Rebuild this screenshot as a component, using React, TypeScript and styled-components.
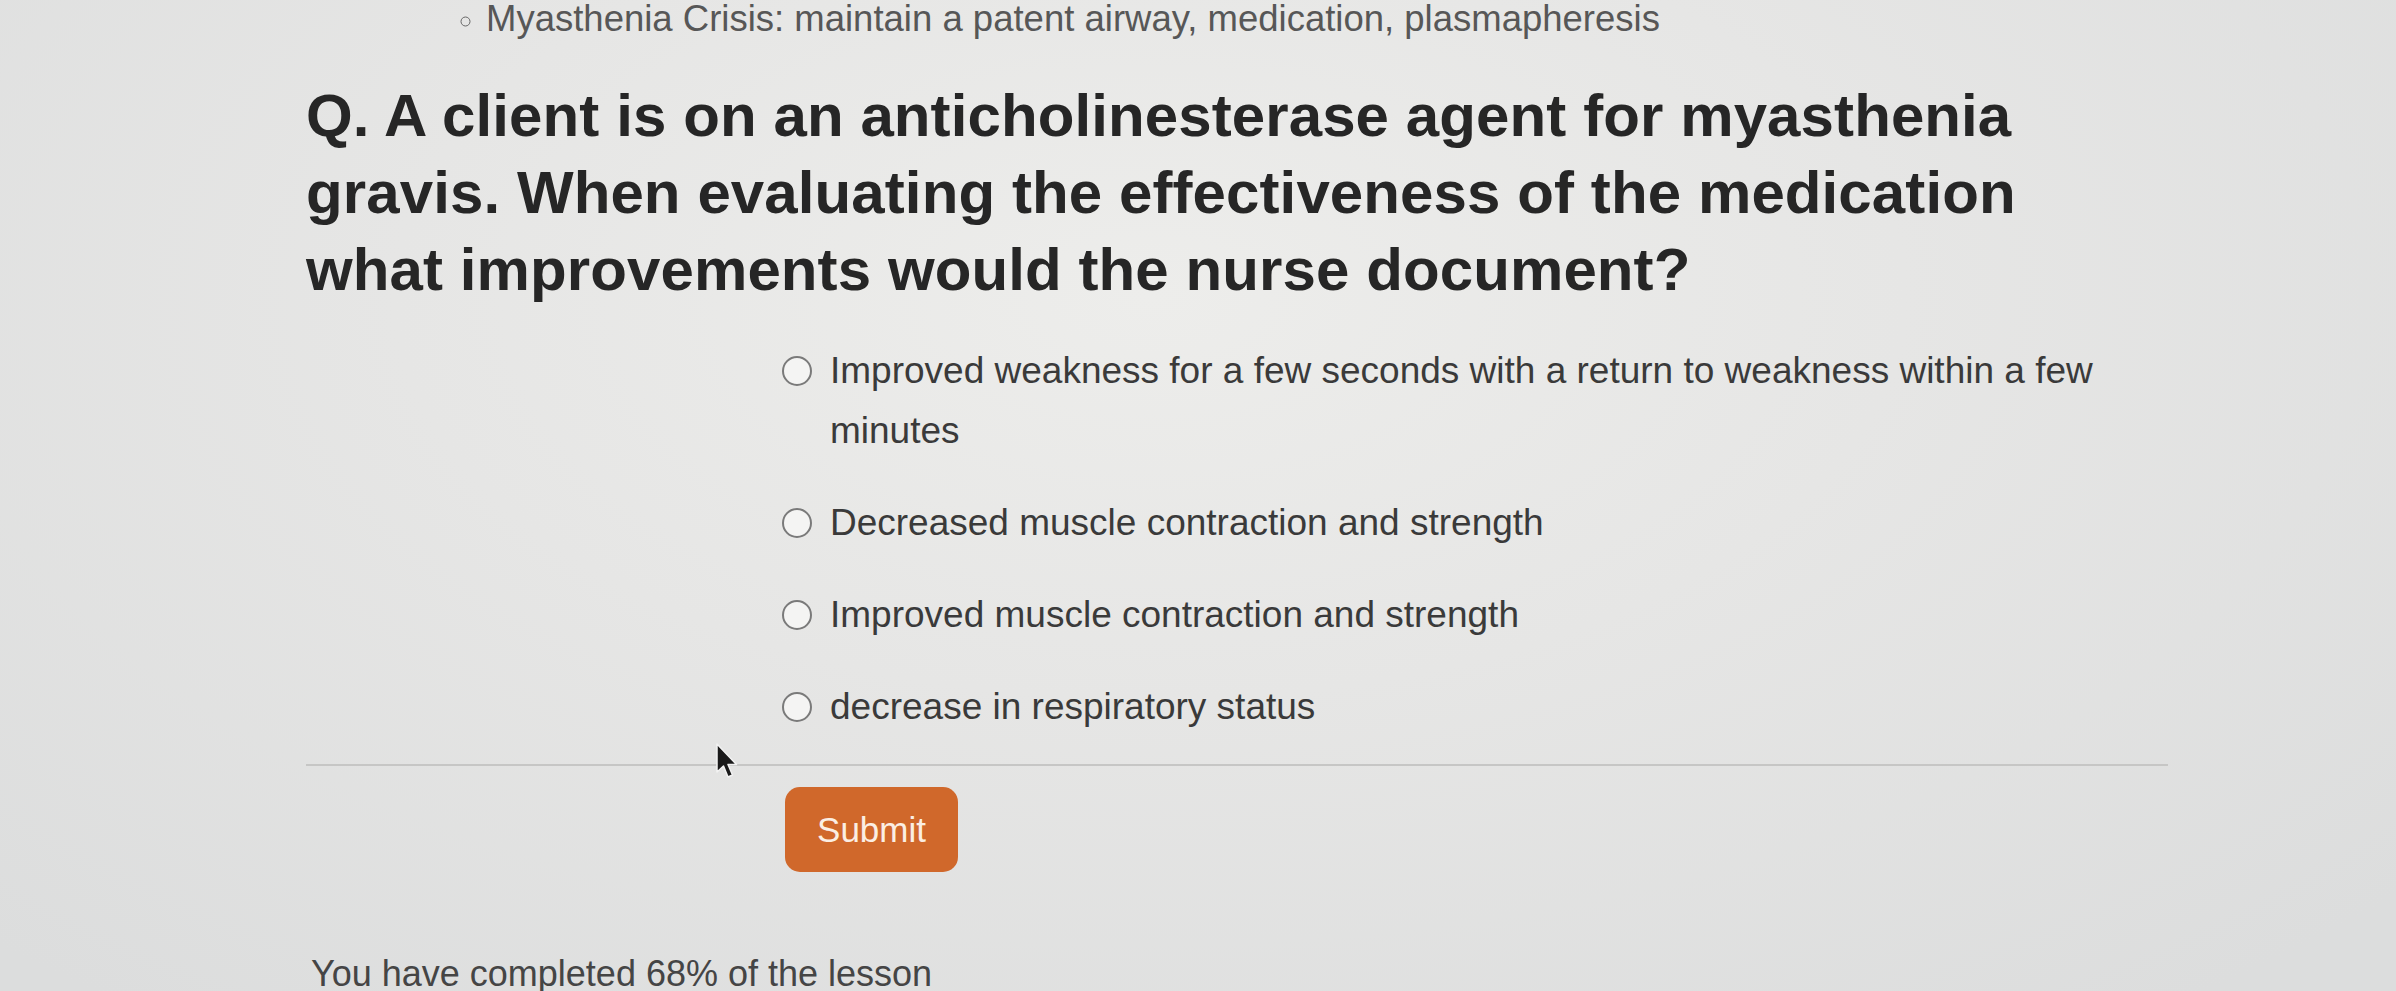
import React from "react";
import styled, { createGlobalStyle } from "styled-components";

const GlobalStyle = createGlobalStyle`
  html, body {
    margin: 0;
    padding: 0;
    height: 100%;
    overflow: hidden;
  }
  body {
    background: radial-gradient(ellipse 70% 90% at 48% 30%, #ededeb 0%, #e6e6e5 45%, #dcdddd 100%);
    font-family: "Liberation Sans", Arial, sans-serif;
  }
`;

const Page = styled.div`
  position: relative;
  width: 2396px;
  height: 991px;
  overflow: hidden;
  padding-left: 306px;
  box-sizing: border-box;
`;

const TopNote = styled.ul`
  margin: -1px 0 0 0;
  padding-left: 180px;
  list-style: circle;
  font-size: 36.5px;
  line-height: 40px;
  color: #575757;
  li::marker {
    font-size: 30px;
    color: #666;
  }
`;

const Heading = styled.h2`
  margin: 38px 0 0 0;
  font-size: 60px;
  line-height: 77px;
  font-weight: 700;
  color: #262626;
  white-space: nowrap;
  letter-spacing: 0.1px;
`;

const Options = styled.div`
  margin: 33px 0 0 476px;
  display: flex;
  flex-direction: column;
  gap: 32px;
`;

const Option = styled.label`
  display: flex;
  align-items: flex-start;
  gap: 18px;
  font-size: 37px;
  line-height: 60px;
  color: #3a3a3a;
  white-space: nowrap;
`;

const Radio = styled.span`
  flex: none;
  width: 26px;
  height: 26px;
  margin-top: 15px;
  border: 2.5px solid #7a7a7a;
  border-radius: 50%;
  background: #f4f4f3;
`;

const Divider = styled.hr`
  margin: 27px 0 0 0;
  width: 1862px;
  border: none;
  height: 2px;
  background: #c6c6c5;
`;

const SubmitButton = styled.button`
  display: block;
  margin: 21px 0 0 479px;
  width: 173px;
  height: 85px;
  border: none;
  border-radius: 15px;
  background: #d0682b;
  color: #fbeee3;
  font-family: "Liberation Sans", Arial, sans-serif;
  font-size: 35px;
  padding: 0;
`;

const Progress = styled.p`
  margin: 82px 0 0 5px;
  font-size: 36px;
  line-height: 40px;
  color: #454545;
`;

const Cursor = styled.svg`
  position: absolute;
  left: 714px;
  top: 742px;
  width: 26px;
  height: 40px;
`;

const options = [
  ["Improved weakness for a few seconds with a return to weakness within a few", "minutes"],
  ["Decreased muscle contraction and strength"],
  ["Improved muscle contraction and strength"],
  ["decrease in respiratory status"],
];

export default function App() {
  return (
    <>
      <GlobalStyle />
      <Page>
        <TopNote>
          <li>Myasthenia Crisis: maintain a patent airway, medication, plasmapheresis</li>
        </TopNote>
        <Heading>
          Q. A client is on an anticholinesterase agent for myasthenia
          <br />
          gravis. When evaluating the effectiveness of the medication
          <br />
          what improvements would the nurse document?
        </Heading>
        <Options>
          {options.map((lines, i) => (
            <Option key={i}>
              <Radio />
              <span>
                {lines.map((l, j) => (
                  <React.Fragment key={j}>
                    {j > 0 && <br />}
                    {l}
                  </React.Fragment>
                ))}
              </span>
            </Option>
          ))}
        </Options>
        <Divider />
        <SubmitButton>Submit</SubmitButton>
        <Progress>You have completed 68% of the lesson</Progress>
        <Cursor viewBox="0 0 26 40">
          <path d="M3 2 L3 30 L9.5 24 L14 35 L18.5 33 L14 22.5 L22.5 22.5 Z" fill="#1a1a1a" stroke="#f2f2f2" strokeWidth="1.5" strokeLinejoin="round" />
        </Cursor>
      </Page>
    </>
  );
}
